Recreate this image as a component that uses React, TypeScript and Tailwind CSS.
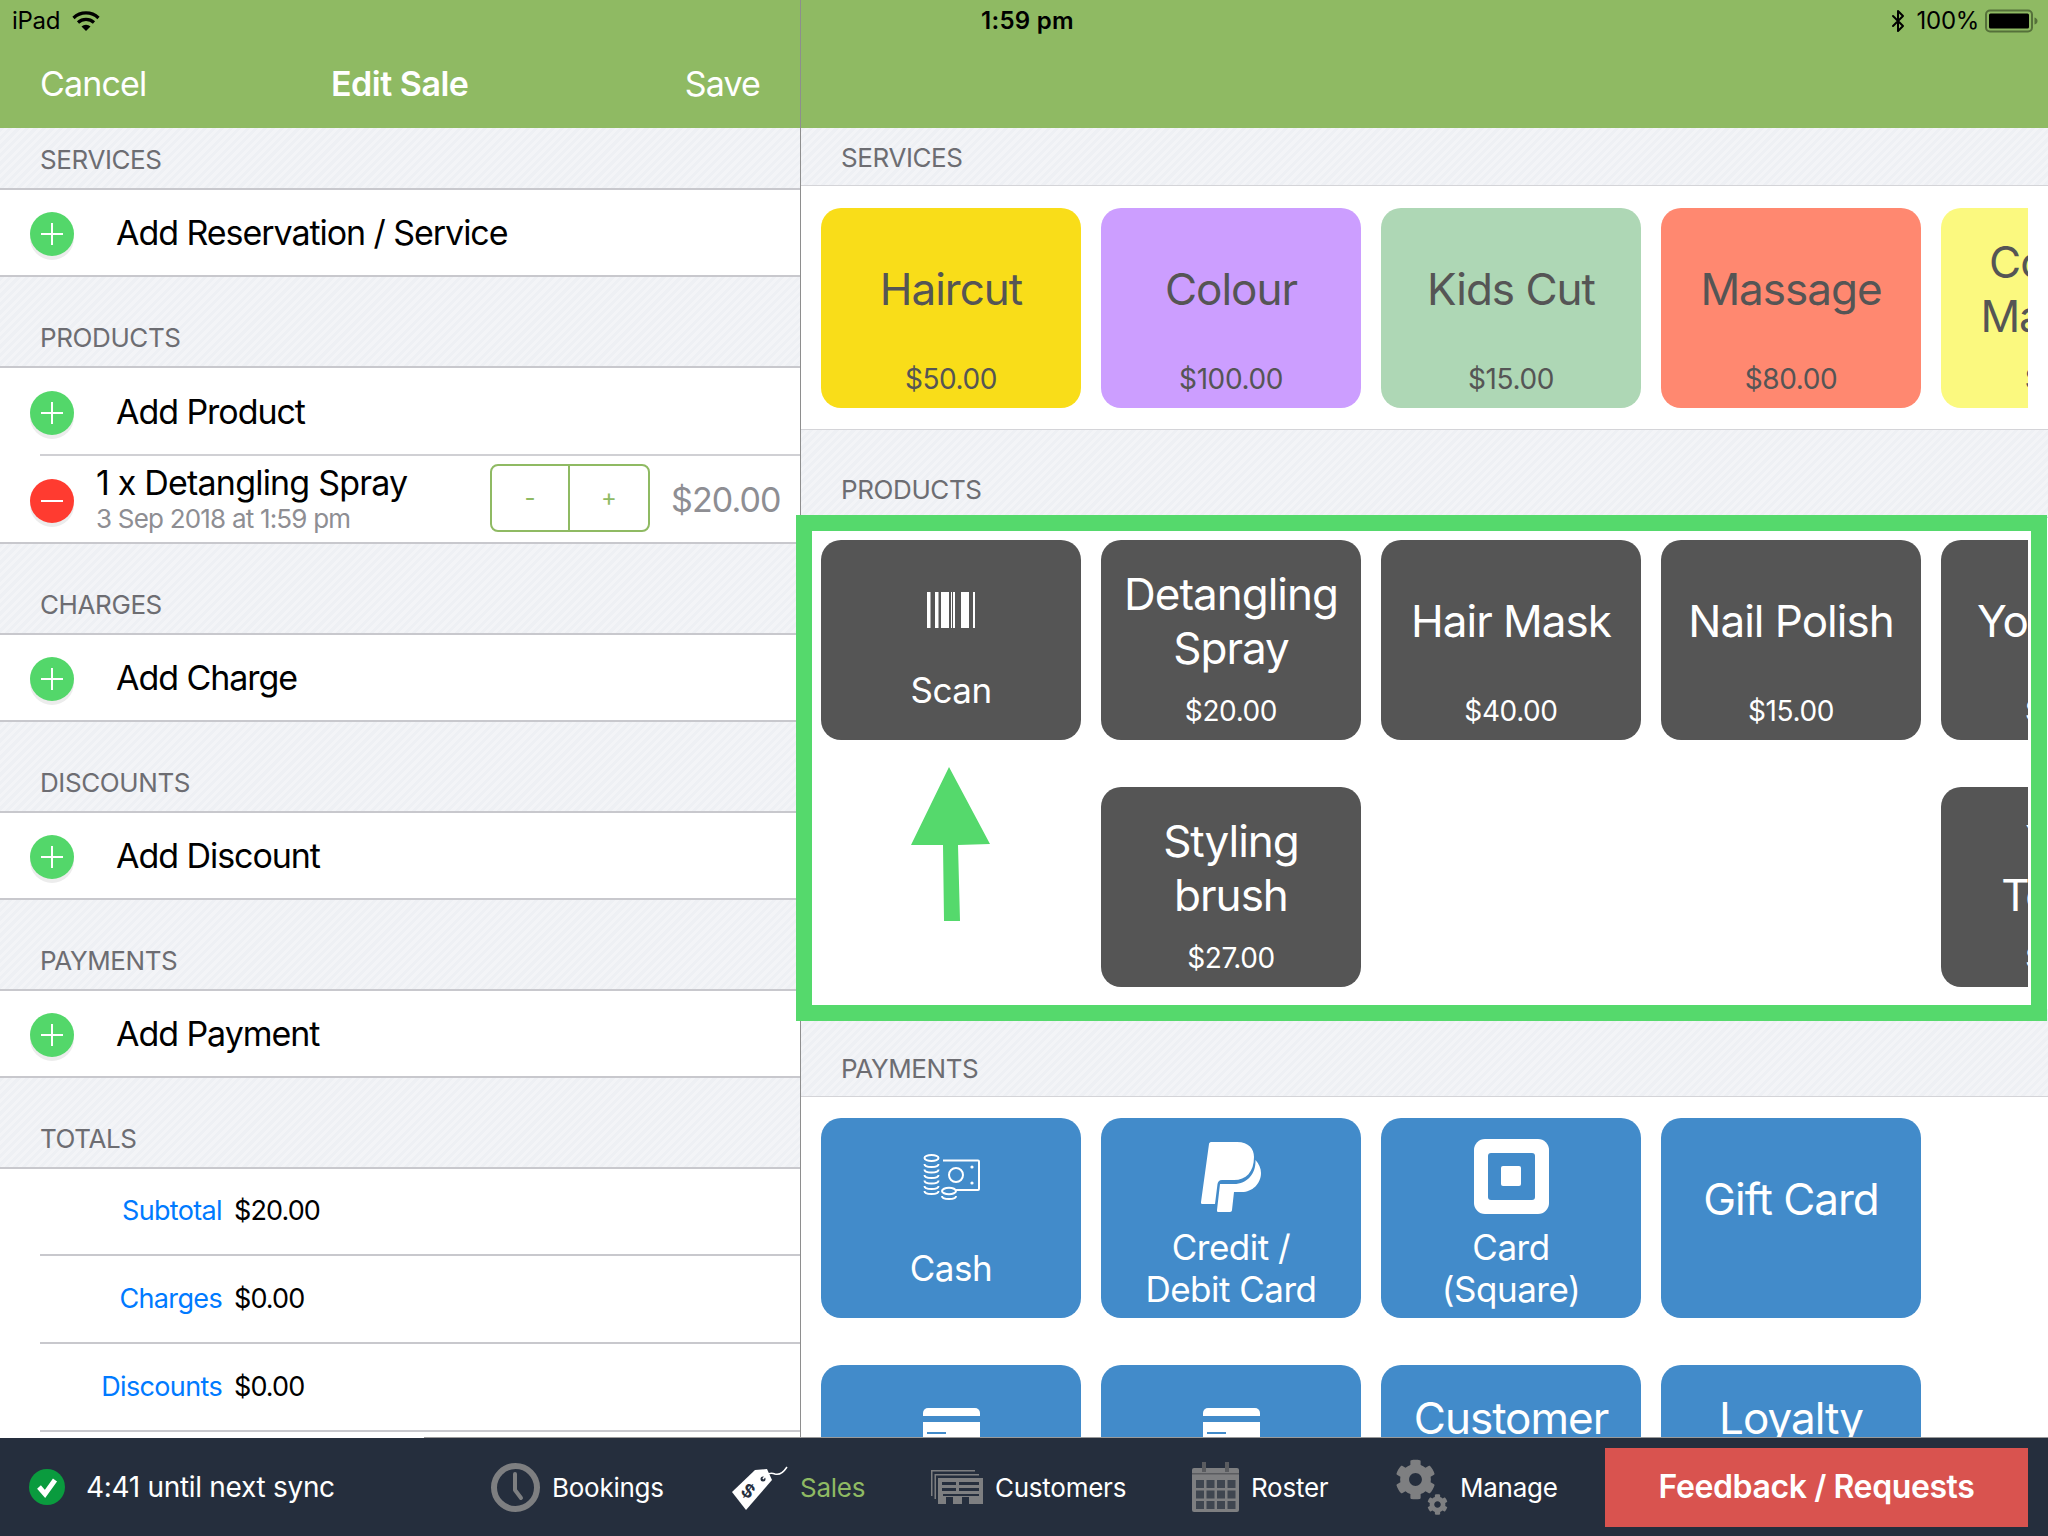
import React from 'react';
import { FaCog } from 'react-icons/fa';
import { Bluetooth } from 'lucide-react';

const stripes =
  'bg-[repeating-linear-gradient(135deg,#eef0f4,#eef0f4_3px,#f3f4f7_3px,#f3f4f7_6px)]';

const LeftHeader: React.FC<{ label: string; first?: boolean }> = ({ label, first }) => (
  <div className={`${stripes} ${first ? 'h-[62px]' : 'h-[91px]'} flex items-end pl-[40px] pb-[12px] border-b-2 border-[#c8c8cd]`}>
    <span className="text-[26px] leading-[32px] text-[#6d6d72] tracking-[-0.4px]">{label}</span>
  </div>
);

const Circle: React.FC<{ kind: 'add' | 'remove' }> = ({ kind }) => (
  <div className={`w-[44px] h-[44px] mt-[3px] rounded-full flex items-center justify-center shrink-0 shadow-[0_4px_0_#ececec] ${kind === 'add' ? 'bg-[#53d76a]' : 'bg-[#ff3b30]'}`}>
    <svg width="24" height="24" viewBox="0 0 24 24">
      <rect x="1" y="11" width="22" height="2" fill="#fff" />
      {kind === 'add' && <rect x="11" y="1" width="2" height="22" fill="#fff" />}
    </svg>
  </div>
);

const AddRow: React.FC<{ label: string }> = ({ label }) => (
  <div className="h-[87px] flex items-center pl-[30px] border-b-2 border-[#c8c8cd] bg-white">
    <Circle kind="add" />
    <span className="ml-[42px] text-[34px] text-black tracking-[-1.05px]">{label}</span>
  </div>
);

const TotalRow: React.FC<{ label: string; value: string; short?: boolean }> = ({ label, value, short }) => (
  <div className={`ml-[40px] ${short ? 'h-[87px]' : 'h-[88px]'} flex items-center border-b-2 border-[#c8c8cd]`}>
    <span className="w-[182px] text-right text-[27px] text-[#007aff] tracking-[-0.65px]">{label}</span>
    <span className="ml-[12px] text-[27px] text-black tracking-[-0.9px]">{value}</span>
  </div>
);

const LeftPane = () => (
  <div className="w-[801px] shrink-0 border-r border-[#8e8e8e] flex flex-col overflow-hidden bg-white">
    <div className="h-[128px] shrink-0 bg-[#8fba63] relative flex items-end justify-between pl-[40px] pr-[40px] pb-[19px] text-white text-[34px] tracking-[-0.85px]">
      <span>Cancel</span>
      <span className="absolute left-[331px] font-semibold tracking-[-0.5px]">Edit Sale</span>
      <span>Save</span>
    </div>
    <LeftHeader label="SERVICES" first />
    <AddRow label="Add Reservation / Service" />
    <LeftHeader label="PRODUCTS" />
    <div className="h-[87px] flex items-center pl-[30px] bg-white">
      <Circle kind="add" />
      <span className="ml-[42px] text-[34px] text-black tracking-[-1.05px]">Add Product</span>
    </div>
    <div className="ml-[40px] border-t-2 border-[#d0d0d4] -mt-[1px]" />
    <div className="h-[88px] flex items-center pl-[30px] border-b-2 border-[#c8c8cd] bg-white">
      <Circle kind="remove" />
      <div className="ml-[22px] w-[394px] flex flex-col">
        <span className="text-[34px] leading-[40px] text-black tracking-[-0.8px] -mt-[2px]">1 x Detangling Spray</span>
        <span className="text-[26px] leading-[30px] mt-[1px] text-[#8e8e93] tracking-[-0.8px] whitespace-nowrap">3 Sep 2018 at 1:59 pm</span>
      </div>
      <div className="w-[160px] h-[68px] -mt-[2px] flex rounded-[8px] border-2 border-[#8fba63] text-[#8fba63] text-[24px]">
        <span className="w-[78px] border-r-2 border-[#8fba63] flex items-center justify-center">-</span>
        <span className="flex-1 flex items-center justify-center">+</span>
      </div>
      <span className="ml-[21px] text-[34px] text-[#8e8e93] tracking-[-0.9px]">$20.00</span>
    </div>
    <LeftHeader label="CHARGES" />
    <AddRow label="Add Charge" />
    <LeftHeader label="DISCOUNTS" />
    <AddRow label="Add Discount" />
    <LeftHeader label="PAYMENTS" />
    <AddRow label="Add Payment" />
    <LeftHeader label="TOTALS" />
    <TotalRow label="Subtotal" value="$20.00" short />
    <TotalRow label="Charges" value="$0.00" />
    <TotalRow label="Discounts" value="$0.00" />
  </div>
);

const RightHeader: React.FC<{ label: string; tall?: boolean }> = ({ label, tall }) => (
  <div className={`${stripes} ${tall ? 'h-[88px]' : 'h-[58px]'} shrink-0 flex items-end pl-[40px] pb-[11px] border-b border-[#d4d4d8]`}>
    <span className="text-[26px] leading-[32px] text-[#6d6d72] tracking-[-0.4px]">{label}</span>
  </div>
);

type CardProps = {
  bg: string;
  fg: string;
  lines?: string[];
  price?: string;
  col?: string;
};

const Card: React.FC<CardProps> = ({ bg, fg, lines, price, col }) => (
  <div className={`${bg} ${fg} ${col ?? ''} w-[260px] h-[200px] rounded-[20px] flex flex-col items-center overflow-hidden whitespace-nowrap`}>
    <div className="flex-1 pt-[9px] flex flex-col items-center justify-center text-[44px] leading-[54px] tracking-[-1px]">
      {lines?.map((l) => <span key={l}>{l}</span>)}
    </div>
    <div className="h-[36px] mb-[11px] text-[28px] leading-[36px] tracking-[-0.4px]">{price}</div>
  </div>
);

const IconCard: React.FC<{ bg: string; icon: React.ReactNode; lines: string[]; iconBox: string; top: string }> = ({ bg, icon, lines, iconBox, top }) => (
  <div className={`${bg} w-[260px] h-[200px] rounded-[20px] flex flex-col items-center text-white overflow-hidden`}>
    <div className={`${iconBox} shrink-0 flex items-center justify-center`}>{icon}</div>
    <div className={`${top} flex flex-col items-center text-[35px] leading-[42px] tracking-[-0.5px] whitespace-nowrap`}>
      {lines.map((l) => <span key={l}>{l}</span>)}
    </div>
  </div>
);

const TitleCard: React.FC<{ title: string; pt: string }> = ({ title, pt }) => (
  <div className={`bg-[#428bca] text-white ${pt} w-[260px] h-[200px] rounded-[20px] flex flex-col items-center text-[44px] leading-[54px] tracking-[-1px] whitespace-nowrap`}>
    {title}
  </div>
);

const Barcode = () => (
  <svg width="48" height="36" viewBox="0 0 48 36" fill="#fff">
    <rect x="0" width="3.5" height="36" />
    <rect x="8" width="3.5" height="36" />
    <rect x="14" width="8" height="36" />
    <rect x="24" width="1" height="36" />
    <rect x="26" width="2" height="36" />
    <rect x="34" width="8" height="36" />
    <rect x="46" width="2" height="36" />
  </svg>
);

const CashIcon = () => (
  <svg width="57" height="47" viewBox="0 0 57 47" fill="none" stroke="#fff" strokeWidth="2">
    <ellipse cx="8.5" cy="4" rx="7" ry="3" />
    {[10, 15.5, 21, 26.5, 32, 37].map((y) => (
      <path key={y} d={`M1.5 ${y} q0 3 7 3 q7 0 7 -3`} />
    ))}
    <path d="M20 6.5 H55 a1 1 0 0 1 1 1 V35 a1 1 0 0 1 -1 1 H33" />
    <circle cx="33" cy="21" r="7" />
    <circle cx="49" cy="13" r="1.6" fill="#fff" stroke="none" />
    <circle cx="49" cy="29" r="1.6" fill="#fff" stroke="none" />
    <ellipse cx="26" cy="37" rx="7" ry="3.2" />
    <path d="M19 42 q0 3 7 3 q7 0 7 -3" />
  </svg>
);

const PaypalIcon = () => (
  <svg width="60" height="70" viewBox="0 0 60 70" fill="#fff">
    <path d="M10 0 H36 C48 0 53 7 53 15 C53 30 45 38 33 38 H21 C18 38 17 40 16.5 42 L14 62 H1 C0 62 0 61 0 60 L8 2 C8 1 9 0 10 0 Z" />
    <path d="M54.5 18 C58 22 60 26 60 31 C60 42 51 50 41 50 H33 L31 68 C31 69 30 70 29 70 H17 C16 70 16 69 16 68 L19 42 H33 C46 42 55 32 54.5 18 Z" />
  </svg>
);

const SquareLogo = () => (
  <svg width="75" height="75" viewBox="0 0 75 75">
    <rect width="75" height="75" rx="11" fill="#fff" />
    <rect x="14" y="14" width="47" height="47" rx="3" fill="#428bca" />
    <rect x="27" y="27" width="20" height="20" rx="2" fill="#fff" />
  </svg>
);

const CardIcon = () => (
  <svg width="57" height="40" viewBox="0 0 57 40" fill="#fff">
    <path d="M0 8 V5 a5 5 0 0 1 5 -5 H52 a5 5 0 0 1 5 5 V8 Z" />
    <rect y="14" width="57" height="26" />
    <rect x="4" y="24" width="19" height="2" fill="#428bca" />
    <rect x="4" y="29" width="8" height="2" fill="#428bca" />
    <rect x="14" y="29" width="8" height="2" fill="#428bca" />
  </svg>
);

const dark = 'bg-[#555555]';
const darkText = 'text-white';

const RightPane = () => (
  <div className="flex-1 min-w-0 flex flex-col overflow-hidden bg-white">
    <div className="h-[128px] shrink-0 bg-[#8fba63]" />
    <RightHeader label="SERVICES" />
    <div className="h-[244px] shrink-0 pt-[22px] pl-[20px] border-b border-[#d4d4d8]">
      <div className="w-[1207px] overflow-hidden grid grid-cols-[repeat(5,260px)] gap-x-[20px]">
        <Card bg="bg-[#f9dd19]" fg="text-[#555555]" lines={['Haircut']} price="$50.00" />
        <Card bg="bg-[#cc9eff]" fg="text-[#555555]" lines={['Colour']} price="$100.00" />
        <Card bg="bg-[#aed7b5]" fg="text-[#555555]" lines={['Kids Cut']} price="$15.00" />
        <Card bg="bg-[#ff8870]" fg="text-[#555555]" lines={['Massage']} price="$80.00" />
        <Card bg="bg-[#fbf97f]" fg="text-[#555555]" lines={['Couples', 'Massage']} price="$30.00" />
      </div>
    </div>
    <RightHeader label="PRODUCTS" tall />
    <div className="h-[491px] shrink-0 pt-[22px] pl-[20px]">
      <div className="w-[1207px] overflow-hidden grid grid-cols-[repeat(5,260px)] gap-x-[20px] gap-y-[47px]">
        <IconCard bg={dark} icon={<Barcode />} lines={['Scan']} iconBox="h-[140px] w-full" top="mt-[-11px]" />
        <Card bg={dark} fg={darkText} lines={['Detangling', 'Spray']} price="$20.00" />
        <Card bg={dark} fg={darkText} lines={['Hair Mask']} price="$40.00" />
        <Card bg={dark} fg={darkText} lines={['Nail Polish']} price="$15.00" />
        <Card bg={dark} fg={darkText} lines={['Yoga Mat']} price="$35.00" />
        <Card bg={dark} fg={darkText} lines={['Styling', 'brush']} price="$27.00" col="col-start-2" />
        <Card bg={dark} fg={darkText} lines={['Your', 'Towels']} price="$25.00" col="col-start-5" />
      </div>
    </div>
    <RightHeader label="PAYMENTS" tall />
    <div className="pt-[21px] pl-[20px]">
      <div className="grid grid-cols-[repeat(4,260px)] gap-x-[20px] gap-y-[47px]">
        <IconCard bg="bg-[#428bca]" icon={<CashIcon />} lines={['Cash']} iconBox="h-[118px] w-full" top="mt-[11px]" />
        <IconCard bg="bg-[#428bca]" icon={<PaypalIcon />} lines={['Credit /', 'Debit Card']} iconBox="h-[108px] w-full pt-[10px]" top="" />
        <IconCard bg="bg-[#428bca]" icon={<SquareLogo />} lines={['Card', '(Square)']} iconBox="h-[108px] w-full pt-[9px]" top="" />
        <TitleCard title="Gift Card" pt="pt-[54px]" />
        <IconCard bg="bg-[#428bca]" icon={<CardIcon />} lines={[]} iconBox="h-[42px] mt-[42px] w-full" top="" />
        <IconCard bg="bg-[#428bca]" icon={<CardIcon />} lines={[]} iconBox="h-[42px] mt-[42px] w-full" top="" />
        <TitleCard title="Customer" pt="pt-[26px]" />
        <TitleCard title="Loyalty" pt="pt-[26px]" />
      </div>
    </div>
  </div>
);

const StatusBar = () => (
  <div className="absolute top-0 left-0 right-0 h-[42px] grid grid-cols-3 items-center text-black text-[24px] tracking-[-0.3px] pl-[12px] pr-[9px]">
    <div className="flex items-center gap-[12px]">
      <span>iPad</span>
      <svg width="28" height="22" viewBox="0 0 28 22" fill="none" stroke="#000" strokeWidth="3.2">
        <path d="M1.5 8 a18 18 0 0 1 25 0" />
        <path d="M6 12.5 a12 12 0 0 1 16 0" />
        <path d="M14 21 L9.5 16.5 a6.5 6.5 0 0 1 9 0 Z" fill="#000" stroke="none" />
      </svg>
    </div>
    <div className="text-center font-semibold ml-[4px] tracking-[0.3px]">1:59 pm</div>
    <div className="flex items-center justify-end gap-[4px]">
      <Bluetooth size={24} strokeWidth={2} className="mr-[3px]" />
      <span>100%</span>
      <svg width="54" height="24" viewBox="0 0 54 24" className="ml-[2px]">
        <rect x="1" y="1.5" width="46" height="21" rx="4" fill="none" stroke="#55703a" strokeWidth="2" />
        <rect x="4" y="4.5" width="40" height="15" rx="1.5" fill="#000" />
        <path d="M49.5 8.5 q3 1 3 3.5 q0 2.5 -3 3.5 Z" fill="#55703a" />
      </svg>
    </div>
  </div>
);

const GreenCallout = () => (
  <>
    <div className="absolute left-[796px] top-[515px] w-[1251px] h-[506px] border-[16px] border-[#55d96c] pointer-events-none" />
    <svg className="absolute left-[900px] top-[760px]" width="100" height="170" viewBox="900 760 100 170">
      <path d="M949 767 L990 844 L958 845 L960 921 L944 921 L943 845 L911 845 Z" fill="#55d96c" />
    </svg>
  </>
);

const ClockIcon = () => (
  <svg width="49" height="49" viewBox="0 0 49 49" fill="none" stroke="#7e7f81">
    <circle cx="24.5" cy="24.5" r="21.5" strokeWidth="6" />
    <path d="M24 11 V27 L30 35" strokeWidth="4" strokeLinecap="round" strokeLinejoin="round" />
  </svg>
);

const TagIcon = () => (
  <svg width="56" height="45" viewBox="0 0 56 45">
    <path d="M23 5 L35 4 L40 15 L14 45 L0 27 Z" fill="#fff" />
    <circle cx="31" cy="14" r="2.5" fill="#252e3d" />
    <path d="M31 14 Q36 6 43 9 Q49 11 55 2" fill="none" stroke="#fff" strokeWidth="1.5" />
    <text x="17" y="33" transform="rotate(35 17 25)" textAnchor="middle" fontSize="20" fontWeight="700" fill="#252e3d" fontFamily="Liberation Sans, sans-serif">$</text>
  </svg>
);

const CustomersIcon = () => (
  <svg width="52" height="34" viewBox="0 0 52 34" fill="#7e7f81">
    <path d="M0 0 H44 V1.5 H1.5 V26 H0 Z" />
    <path d="M3.5 4 H48 V5.5 H5 V29 H3.5 Z" />
    <path d="M7 8 H52 V34 H38 V27 H31 V34 H22 V27 H15 V34 H7 Z" />
    <g fill="#252e3d">
      <rect x="11" y="12" width="14" height="3" />
      <rect x="28" y="12" width="20" height="3" />
      <rect x="11" y="18" width="14" height="3" />
      <rect x="28" y="18" width="20" height="3" />
      <rect x="12" y="24" width="36" height="2" />
    </g>
  </svg>
);

const RosterIcon = () => (
  <svg width="47" height="50" viewBox="0 0 47 50">
    <rect y="6" width="47" height="44" rx="2" fill="#7e7f81" />
    <rect x="10" width="4" height="10" fill="#5a5c60" />
    <rect x="33" width="4" height="10" fill="#5a5c60" />
    <rect y="11" width="47" height="1.5" fill="#5a5c60" />
    {[18, 28.5, 39].map((y) =>
      [4, 14.5, 25, 35.5].map((x) => (
        <rect key={`${x}-${y}`} x={x} y={y} width="8" height="8" fill="#3f4650" />
      )),
    )}
  </svg>
);

const GearsIcon = () => (
  <div className="relative w-[53px] h-[56px]">
    <FaCog size={41} color="#7e7f81" className="absolute left-0 top-0" />
    <FaCog size={21} color="#7e7f81" className="absolute right-0 bottom-0" />
  </div>
);

const NavItem: React.FC<{ icon: React.ReactNode; label: string; width: string; active?: boolean }> = ({ icon, label, width, active }) => (
  <div className={`${width} shrink-0 flex items-center gap-[12px]`}>
    {icon}
    <span className={`text-[26px] tracking-[-0.25px] ${active ? 'text-[#8fba63]' : 'text-white'}`}>{label}</span>
  </div>
);

const BottomBar = () => (
  <div className="relative h-[98px] shrink-0 bg-[#252e3d] flex items-center pl-[29px] pr-[20px]">
    <div className="absolute -top-[1px] left-[424px] right-0 h-[1px] bg-[#9a9a9a]" />
    <div className="w-[462px] shrink-0 flex items-center gap-[21px]">
      <svg width="36" height="36" viewBox="0 0 36 36">
        <circle cx="18" cy="18" r="18" fill="#0a9b3e" />
        <path d="M10 18 L16 25 L26 11" fill="none" stroke="#fff" strokeWidth="5" />
      </svg>
      <span className="text-[28px] text-white tracking-[-0.3px]">4:41 until next sync</span>
    </div>
    <NavItem icon={<ClockIcon />} label="Bookings" width="w-[241px]" />
    <NavItem icon={<TagIcon />} label="Sales" width="w-[199px]" active />
    <NavItem icon={<CustomersIcon />} label="Customers" width="w-[261px]" />
    <NavItem icon={<RosterIcon />} label="Roster" width="w-[203px]" />
    <NavItem icon={<GearsIcon />} label="Manage" width="w-[190px]" />
    <div className="ml-auto w-[423px] h-[79px] bg-[#d9534f] flex items-center justify-center text-white text-[32px] font-semibold tracking-[-0.4px]">
      Feedback / Requests
    </div>
  </div>
);

export default function App() {
  return (
    <div className="relative w-[2048px] h-[1536px] overflow-hidden flex flex-col bg-white font-['Inter',sans-serif]">
      <div className="flex-1 min-h-0 flex overflow-hidden">
        <LeftPane />
        <RightPane />
      </div>
      <BottomBar />
      <StatusBar />
      <GreenCallout />
    </div>
  );
}
